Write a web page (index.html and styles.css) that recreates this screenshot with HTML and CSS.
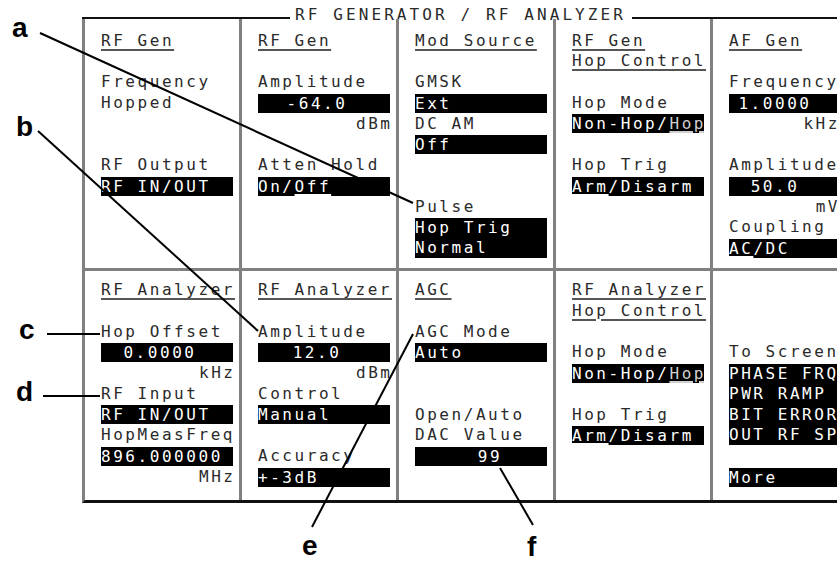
FILE: index.html
```html
<!DOCTYPE html>
<html>
<head>
<meta charset="utf-8">
<title>RF Generator / RF Analyzer</title>
<link rel="stylesheet" href="styles.css">
</head>
<body>
<div class="screen">
  <div class="titlebar">
    <span class="rule lead"></span>
    <span class="title">RF GENERATOR / RF ANALYZER</span>
    <span class="rule"></span>
  </div>
  <div class="grid">
    <section class="cell top">
      <div class="row head"><span>RF Gen</span></div>
      <div class="sp"></div>
      <div class="row">Frequency</div>
      <div class="row">Hopped</div>
      <div class="sp2"></div>
      <div class="row">RF Output</div>
      <div class="box">RF IN/OUT</div>
    </section>
    <section class="cell top">
      <div class="row head"><span>RF Gen</span></div>
      <div class="sp"></div>
      <div class="row">Amplitude</div>
      <div class="box num">-64.0</div>
      <div class="row unit">dBm</div>
      <div class="sp"></div>
      <div class="row">Atten Hold</div>
      <div class="box">On/<span class="sel">Off</span></div>
    </section>
    <section class="cell top">
      <div class="row head"><span>Mod Source</span></div>
      <div class="sp"></div>
      <div class="row">GMSK</div>
      <div class="box">Ext</div>
      <div class="row">DC AM</div>
      <div class="box">Off</div>
      <div class="sp2"></div>
      <div class="row">Pulse</div>
      <div class="box l2"><div>Hop Trig</div><div>Normal</div></div>
    </section>
    <section class="cell top">
      <div class="row head"><span>RF Gen</span></div>
      <div class="row head"><span>Hop Control</span></div>
      <div class="sp"></div>
      <div class="row">Hop Mode</div>
      <div class="box">Non-Hop/<span class="sel dim">Hop</span></div>
      <div class="sp"></div>
      <div class="row">Hop Trig</div>
      <div class="box"><span class="sel">Arm</span>/Disarm</div>
    </section>
    <section class="cell top">
      <div class="row head"><span>AF Gen</span></div>
      <div class="sp"></div>
      <div class="row">Frequency</div>
      <div class="box num wide">1.0000</div>
      <div class="row unit edge">kHz</div>
      <div class="sp"></div>
      <div class="row">Amplitude</div>
      <div class="box num wide">50.0</div>
      <div class="row unit edge">mV</div>
      <div class="row">Coupling</div>
      <div class="box"><span class="sel">AC</span>/DC</div>
    </section>

    <section class="cell bottom">
      <div class="row head"><span>RF Analyzer</span></div>
      <div class="sp"></div>
      <div class="row">Hop Offset</div>
      <div class="box num">0.0000</div>
      <div class="row unit">kHz</div>
      <div class="row">RF Input</div>
      <div class="box">RF IN/OUT</div>
      <div class="row">HopMeasFreq</div>
      <div class="box">896.000000</div>
      <div class="row unit">MHz</div>
    </section>
    <section class="cell bottom">
      <div class="row head"><span>RF Analyzer</span></div>
      <div class="sp"></div>
      <div class="row">Amplitude</div>
      <div class="box num">12.0</div>
      <div class="row unit">dBm</div>
      <div class="row">Control</div>
      <div class="box">Manual</div>
      <div class="sp"></div>
      <div class="row">Accuracy</div>
      <div class="box">+-3dB</div>
    </section>
    <section class="cell bottom">
      <div class="row head"><span>AGC</span></div>
      <div class="sp"></div>
      <div class="row">AGC Mode</div>
      <div class="box">Auto</div>
      <div class="sp2"></div>
      <div class="row">Open/Auto</div>
      <div class="row">DAC Value</div>
      <div class="box num right">99</div>
    </section>
    <section class="cell bottom">
      <div class="row head"><span>RF Analyzer</span></div>
      <div class="row head"><span>Hop Control</span></div>
      <div class="sp"></div>
      <div class="row">Hop Mode</div>
      <div class="box">Non-Hop/<span class="sel dim">Hop</span></div>
      <div class="sp"></div>
      <div class="row">Hop Trig</div>
      <div class="box"><span class="sel">Arm</span>/Disarm</div>
    </section>
    <section class="cell bottom">
      <div class="sp3"></div>
      <div class="row">To Screen</div>
      <div class="box l4"><div>PHASE FRQ</div><div>PWR RAMP</div><div>BIT ERROR</div><div>OUT RF SP</div></div>
      <div class="sp"></div>
      <div class="box">More</div>
    </section>
  </div>
</div>

<svg class="callouts" width="837" height="565" viewBox="0 0 837 565">
  <line x1="40" y1="33" x2="413" y2="203"/>
  <line x1="38" y1="131" x2="258" y2="331"/>
  <line x1="47" y1="334" x2="100" y2="334"/>
  <line x1="43" y1="396" x2="100" y2="396"/>
  <line x1="312" y1="527" x2="413" y2="334"/>
  <line x1="533" y1="525" x2="500" y2="468"/>
</svg>
<span class="label la">a</span>
<span class="label lb">b</span>
<span class="label lc">c</span>
<span class="label ld">d</span>
<span class="label le">e</span>
<span class="label lf">f</span>
</body>
</html>
```

FILE: styles.css
```css
html, body {
  margin: 0;
  padding: 0;
  background: #fff;
}
body {
  width: 837px;
  height: 565px;
  overflow: hidden;
  position: relative;
  font-family: "DejaVu Sans Mono", "Liberation Mono", monospace;
  color: #2a2a2a;
}
.screen {
  margin-left: 82px;
  width: 788px;
}
.titlebar {
  display: flex;
  align-items: flex-end;
  height: 19px;
}
.rule {
  flex: 1;
  height: 2px;
  background: #111;
}
.rule.lead {
  flex: 0 0 208px;
}
.title {
  flex: none;
  font-size: 16px;
  line-height: 16px;
  letter-spacing: 3.1px;
  padding: 0 6px 0 5px;
  margin-bottom: -3.5px;
  white-space: nowrap;
}
.grid {
  display: grid;
  grid-template-columns: repeat(5, 157px);
  grid-template-rows: 252px 229px;
  border-left: 3px solid #808080;
  border-bottom: 3px solid #111;
}
.cell {
  box-sizing: border-box;
  display: flex;
  flex-direction: column;
  padding: 11.6px 6px 0 16px;
  border-right: 3px solid #808080;
  overflow: hidden;
}
.cell.top {
  border-bottom: 3px solid #808080;
}
.cell.bottom {
  padding-top: 9px;
}
.row {
  flex: none;
  height: 20.75px;
  line-height: 20.75px;
  font-size: 16px;
  letter-spacing: 2.55px;
  white-space: nowrap;
}
.head span {
  text-decoration: underline;
  text-decoration-thickness: 2px;
  text-underline-offset: 3px;
  text-decoration-color: #555;
}
.unit {
  text-align: right;
  margin-right: -2.55px;
}
.unit.edge {
  margin-right: 21px;
}
.sp { flex: none; height: 20.75px; }
.sp2 { flex: none; height: 41.5px; }
.sp3 { flex: none; height: 62.25px; }
.box {
  flex: none;
  height: 19px;
  line-height: 19px;
  margin: 0.875px 0;
  background: #000;
  color: #fff;
  font-size: 16px;
  letter-spacing: 2.55px;
  white-space: nowrap;
  overflow: hidden;
}
.box.l2 {
  height: 39.75px;
  line-height: 19.875px;
}
.box.l4 {
  height: 81.25px;
  line-height: 20.3125px;
}
.num {
  text-align: center;
  padding-right: 14px;
}
.num.wide {
  padding-right: 40px;
}
.num.right {
  padding-right: 0;
  padding-left: 18px;
}
.sel {
  text-decoration: underline;
  text-decoration-thickness: 2px;
  text-underline-offset: 2px;
}
.sel.dim {
  color: #d0d0d0;
}
.callouts {
  position: absolute;
  left: 0;
  top: 0;
  pointer-events: none;
}
.callouts line {
  stroke: #000;
  stroke-width: 2;
}
.label {
  position: absolute;
  font-family: "Liberation Sans", Arial, sans-serif;
  font-weight: bold;
  font-size: 28px;
  line-height: 28px;
  color: #000;
}
.la { left: 12px; top: 14px; }
.lb { left: 16px; top: 113px; }
.lc { left: 19px; top: 316px; }
.ld { left: 16px; top: 378px; }
.le { left: 302px; top: 532px; }
.lf { left: 527px; top: 533px; }
```
